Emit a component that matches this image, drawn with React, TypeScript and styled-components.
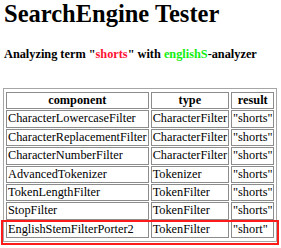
import styled, { createGlobalStyle } from "styled-components";

const serif = `"Liberation Serif", "Times New Roman", Times, serif`;

const GlobalStyle = createGlobalStyle`
  html, body {
    margin: 0;
    padding: 0;
    background: #ffffff;
  }
  body {
    font-family: ${serif};
    color: #000000;
  }
`;

const Page = styled.div`
  padding: 0 4px 0 3px;
  font-family: ${serif};
`;

const Title = styled.h1`
  margin: 0;
  padding-left: 1px;
  font-family: ${serif};
  font-size: 24.5px;
  line-height: 28px;
  font-weight: bold;
`;

const Subtitle = styled.h4`
  margin: 18.5px 0 0;
  padding-left: 1px;
  font-family: ${serif};
  font-size: 12.3px;
  line-height: 14px;
  font-weight: bold;
`;

const Term = styled.span<{ $tone: "red" | "green" }>`
  color: ${(p) => (p.$tone === "red" ? "#ff1133" : "#11ee11")};
`;

const TableWrap = styled.div`
  position: relative;
  display: inline-block;
  margin-top: 27.5px;
`;

const Grid = styled.table`
  border: 1px solid #a6a6a6;
  border-spacing: 2px 1px;
  padding: 2px 0;
  font-family: ${serif};
  font-size: 12.3px;
  line-height: 13.4px;
`;

const HeadCell = styled.th`
  border: 1px solid #8c8c8c;
  padding: 1px;
  font-weight: bold;
  text-align: center;
`;

const Cell = styled.td`
  border: 1px solid #8c8c8c;
  padding: 1px;
  text-align: left;
  white-space: nowrap;
`;

const Highlight = styled.div`
  position: absolute;
  left: -2px;
  right: -2px;
  bottom: -3px;
  height: 25px;
  border: 2px solid #ff1a1a;
  box-sizing: border-box;
  pointer-events: none;
`;

const rows: [string, string, string][] = [
  ["CharacterLowercaseFilter", "CharacterFilter", "\"shorts\""],
  ["CharacterReplacementFilter", "CharacterFilter", "\"shorts\""],
  ["CharacterNumberFilter", "CharacterFilter", "\"shorts\""],
  ["AdvancedTokenizer", "Tokenizer", "\"shorts\""],
  ["TokenLengthFilter", "TokenFilter", "\"shorts\""],
  ["StopFilter", "TokenFilter", "\"shorts\""],
  ["EnglishStemFilterPorter2", "TokenFilter", "\"short\""],
];

export default function App() {
  return (
    <Page>
      <GlobalStyle />
      <Title>SearchEngine Tester</Title>
      <Subtitle>
        Analyzing term "<Term $tone="red">shorts</Term>" with{" "}
        <Term $tone="green">englishS</Term>-analyzer
      </Subtitle>
      <TableWrap>
        <Grid>
          <thead>
            <tr>
              <HeadCell>component</HeadCell>
              <HeadCell>type</HeadCell>
              <HeadCell>result</HeadCell>
            </tr>
          </thead>
          <tbody>
            {rows.map(([component, type, result]) => (
              <tr key={component}>
                <Cell>{component}</Cell>
                <Cell>{type}</Cell>
                <Cell>{result}</Cell>
              </tr>
            ))}
          </tbody>
        </Grid>
        <Highlight />
      </TableWrap>
    </Page>
  );
}
